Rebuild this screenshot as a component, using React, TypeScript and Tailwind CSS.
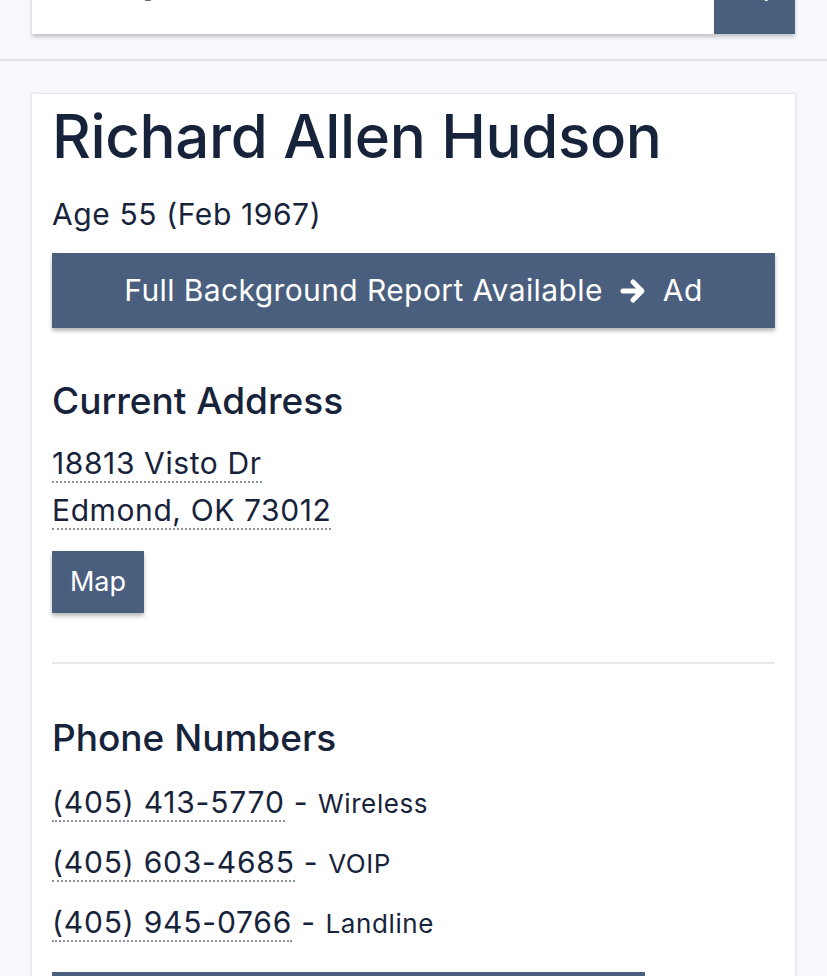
import React from "react";

const font = { fontFamily: "Inter, 'Noto Sans', sans-serif" };

const Dotted: React.FC<{ children: React.ReactNode }> = ({ children }) => (
  <span className="border-b-2 border-dotted border-[#8a94a3]">{children}</span>
);

const phones = [
  { num: "(405) 413-5770", kind: "Wireless" },
  { num: "(405) 603-4685", kind: "VOIP" },
  { num: "(405) 945-0766", kind: "Landline" },
];

export default function App() {
  return (
    <div
      className="h-[976px] overflow-hidden bg-[#f7f9fc] text-[#17233a]"
      style={font}
    >
      {/* search header, scrolled so its top is off screen */}
      <div className="border-b-2 border-[#e1e5ea] px-8 pb-[25px]">
        <div className="mt-[-40px] flex h-[74px] shadow-[0_3px_4px_rgba(0,0,0,0.22)]">
          <div className="flex flex-1 items-start bg-white pl-[34px] text-[36px] leading-[44px] text-[#3a3a3a]">
            <span className="mt-[5px]">Richard Hudson</span>
          </div>
          <button className="flex w-[81px] items-start justify-center bg-[#4a5f7d] text-white">
            <svg width="30" height="30" viewBox="0 0 24 24" className="mt-[13px]" fill="none" stroke="currentColor" strokeWidth="3" strokeLinecap="round">
              <circle cx="10" cy="10" r="7" />
              <path d="M15 15l6 6" />
            </svg>
          </button>
        </div>
      </div>

      <div className="mx-8 mt-[33px] bg-white px-5 pt-[4px] shadow-[0_0_3px_rgba(0,0,0,0.2)]">
        <h1 className="text-[60px] font-medium leading-[76px] tracking-[-0.35px]">
          Richard Allen Hudson
        </h1>
        <p className="mt-[22px] text-[30px] leading-[36px] tracking-[0.6px]">
          Age 55 (Feb 1967)
        </p>
        <button className="mt-[21px] flex h-[75px] w-full items-center justify-center gap-4 bg-[#4a5f7d] text-[30px] tracking-[0.4px] text-white shadow-[0_3px_4px_rgba(0,0,0,0.28)]">
          <span>Full Background Report Available</span>
          <svg width="28" height="26" viewBox="0 0 28 26" fill="none" stroke="currentColor" strokeWidth="5" strokeLinecap="round" strokeLinejoin="round">
            <path d="M4 13h18M14 4l9 9-9 9" />
          </svg>
          <span>Ad</span>
        </button>

        <h2 className="mt-[49px] text-[37px] font-medium leading-[48px]">
          Current Address
        </h2>
        <div className="mt-[15px] text-[30px] leading-[47px] tracking-[0.6px]">
          <div>
            <Dotted>18813 Visto Dr</Dotted>
          </div>
          <div>
            <Dotted>Edmond, OK 73012</Dotted>
          </div>
        </div>
        <button className="mt-[17px] h-[62px] w-[92px] bg-[#4a5f7d] text-[27px] text-white shadow-[0_3px_4px_rgba(0,0,0,0.28)]">
          Map
        </button>

        <div className="mt-[49px] h-[2px] bg-[#e5e7eb]" />

        <h2 className="mt-[50px] text-[37px] font-medium leading-[48px]">
          Phone Numbers
        </h2>
        <div className="mt-[19px] flex flex-col gap-[18px]">
          {phones.map((p) => (
            <div key={p.num} className="flex h-[42px] items-baseline leading-[42px] tracking-[0.6px]">
              <span className="text-[30px] tracking-[0.8px]">
                <Dotted>{p.num}</Dotted>
              </span>
              <span className="ml-[9px] text-[30px]">-</span>
              <span className="ml-[10px] text-[26px]">{p.kind}</span>
            </div>
          ))}
        </div>
        <div className="mt-[29px] h-[60px] w-[593px] bg-[#4a5f7d]" />
      </div>
    </div>
  );
}
